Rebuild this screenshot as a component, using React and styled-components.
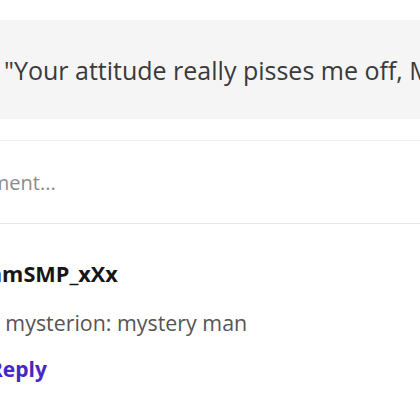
import React from 'react'
import styled, { createGlobalStyle } from 'styled-components'

const GlobalStyle = createGlobalStyle`
  html, body {
    margin: 0;
    padding: 0;
    background: #ffffff;
    overflow: hidden;
  }

  body {
    font-family: "Open Sans", "Noto Sans", "Liberation Sans", sans-serif;
  }
`

const Page = styled.div`
  width: 760px;
  margin-left: -120px;
  padding-top: 20px;
`

const Quote = styled.blockquote`
  margin: 0;
  height: 99px;
  padding-left: 124px;
  display: flex;
  align-items: center;
  background: #f5f5f5;
  color: #3a3a3a;
  font-size: 25px;
  white-space: nowrap;
`

const CommentForm = styled.form`
  margin-top: 21px;
`

const CommentInput = styled.input`
  box-sizing: border-box;
  display: block;
  width: 100%;
  height: 84px;
  padding: 0 0 0 11px;
  border: 1px solid #e6e6e6;
  border-top-color: #efefef;
  outline: none;
  font-family: inherit;
  font-size: 20px;
  color: #333;

  &::placeholder {
    color: #8c8c8c;
  }
`

const CommentList = styled.ul`
  list-style: none;
  margin: 35px 0 0;
  padding: 0;
`

const Comment = styled.li`
  display: flex;
  flex-direction: column;
  padding-left: 109px;
`

const Author = styled.span`
  font-size: 21.7px;
  line-height: 30px;
  font-weight: 700;
  color: #161616;
`

const Body = styled.p`
  margin: 19px 0 0;
  font-size: 21.4px;
  line-height: 30px;
  color: #555555;
`

const ReplyButton = styled.button`
  align-self: flex-start;
  margin-top: 16px;
  padding: 0;
  border: none;
  background: none;
  font-family: inherit;
  font-size: 21px;
  line-height: 30px;
  font-weight: 700;
  color: #4828c2;
  cursor: pointer;
`

const App = () => (
  <>
    <GlobalStyle />
    <Page>
      <Quote>"Your attitude really pisses me off, Mysterion."</Quote>
      <CommentForm onSubmit={e => e.preventDefault()}>
        <CommentInput placeholder="Add a comment..." />
      </CommentForm>
      <CommentList>
        <Comment>
          <Author>amSMP_xXx</Author>
          <Body>il mysterion: mystery man</Body>
          <ReplyButton type="button">Reply</ReplyButton>
        </Comment>
      </CommentList>
    </Page>
  </>
)

export default App
